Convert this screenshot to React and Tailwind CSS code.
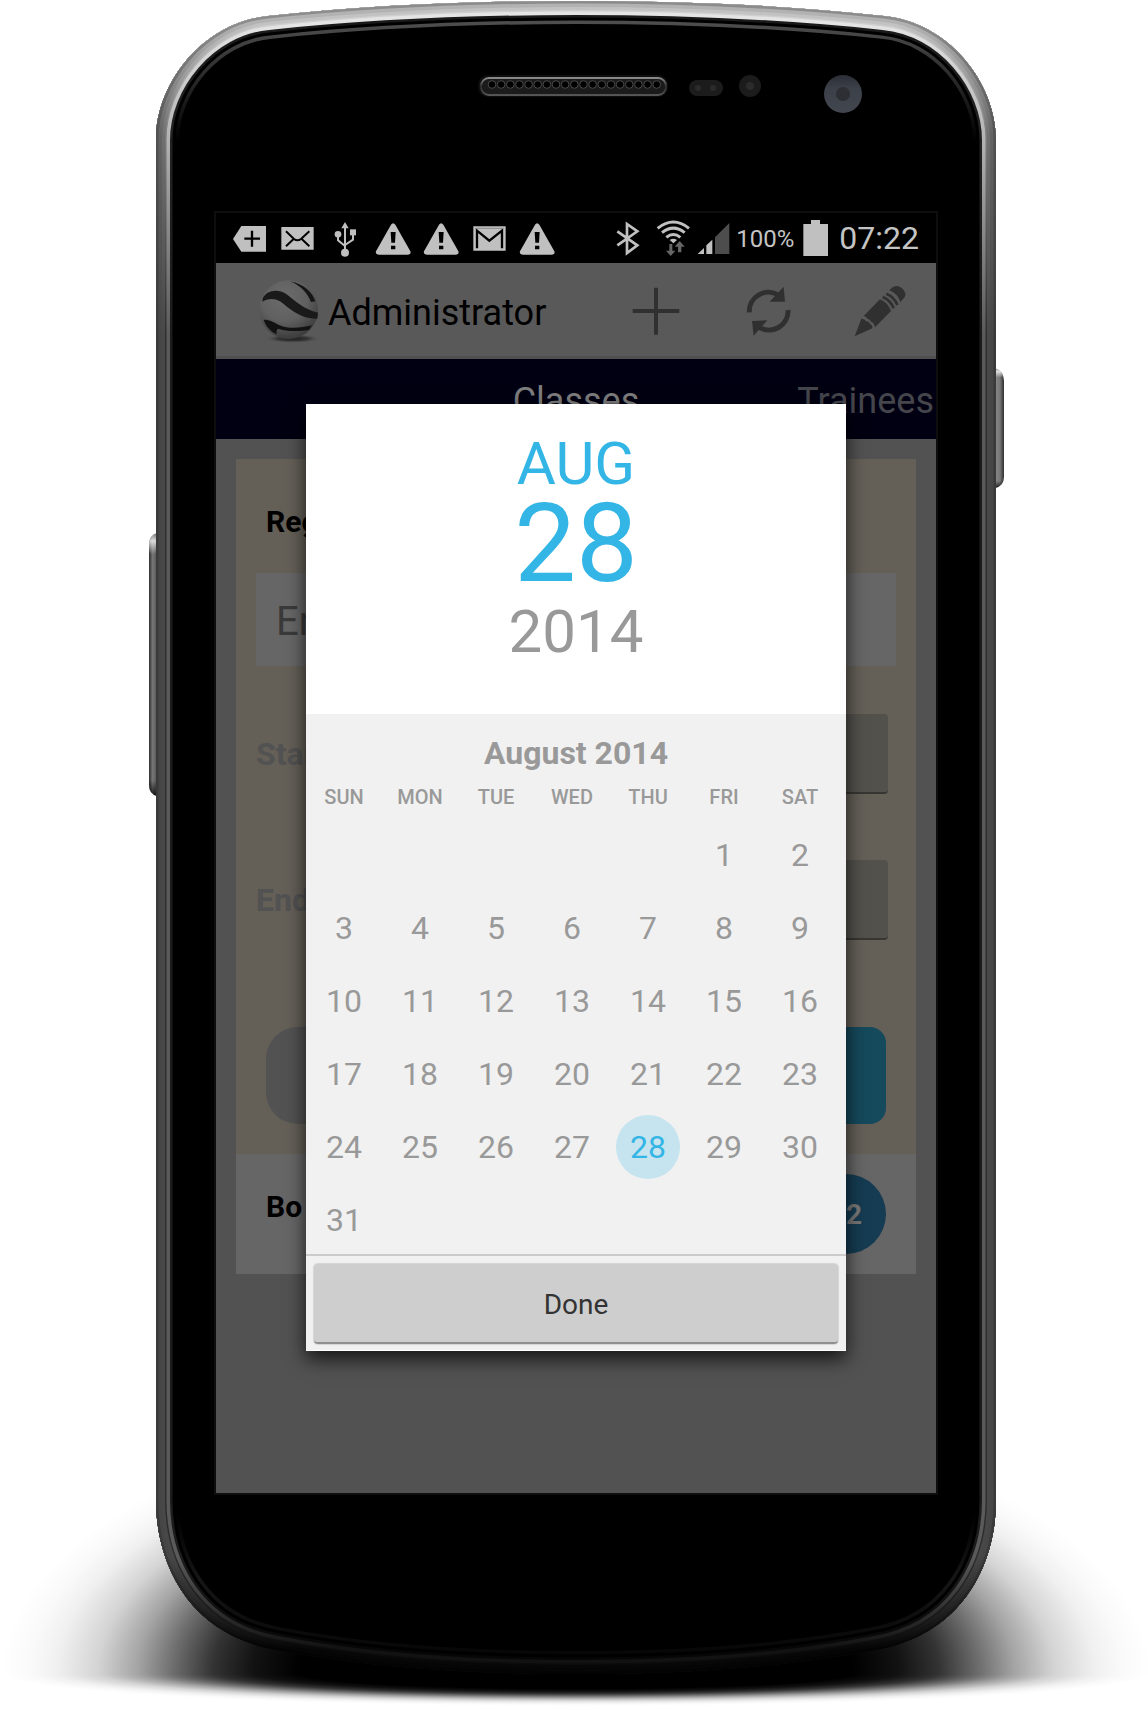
import React from "react";

const OUTLINE =
  "M156 140 C156 82 204 22 268 16 C370 5 470 1 576 1 C682 1 782 5 884 16 C948 22 996 82 996 140 V1500 C996 1570 958 1636 875 1650 C780 1668 680 1674 576 1674 C472 1674 372 1668 277 1650 C194 1636 156 1570 156 1500 Z";

const rim = [
  { w: 36, id: "rimEdge" },
  { w: 31, id: "rimBright" },
  { w: 24, id: "rimLine" },
  { w: 21, id: "rimUpper" },
  { w: 15, id: "rimMid" },
  { w: 8, id: "rimOuter" },
  { w: 3, id: "rimDark" },
];

const rimStops = {
  rimEdge: ["#1a1a1a", "#222222", "#1c1c1c", "#060606"],
  rimBright: ["#e4e4e4", "#b5b5b5", "#5a5a5a", "#121212"],
  rimLine: ["#cfcfcf", "#7d7d7d", "#2e2e2e", "#0b0b0b"],
  rimUpper: ["#c2c2c2", "#707070", "#484848", "#070707"],
  rimMid: ["#b2b2b2", "#646464", "#464646", "#050505"],
  rimOuter: ["#8c8c8c", "#525252", "#3a3a3a", "#030303"],
  rimDark: ["#606060", "#3a3a3a", "#202020", "#000000"],
};

const shadeStops = [
  [0.48, 1],
  [0.56, 0.93],
  [0.63, 0.8],
  [0.7, 0.57],
  [0.76, 0.36],
  [0.83, 0.17],
  [0.9, 0.06],
  [0.95, 0.02],
  [1, 0],
];

function Shade({ id, ry }) {
  return (
    <radialGradient
      id={id}
      gradientUnits="userSpaceOnUse"
      cx="0"
      cy="0"
      r="1"
      gradientTransform={"translate(576 1673) scale(576 " + ry + ")"}
    >
      {shadeStops.map(([o, a]) => (
        <stop key={o} offset={o} stopColor="#000" stopOpacity={a} />
      ))}
    </radialGradient>
  );
}

function PhoneBody() {
  return (
    <svg
      className="absolute inset-0 h-full w-full"
      viewBox="0 0 1148 1712"
      preserveAspectRatio="none"
      aria-hidden="true"
    >
      <defs>
        <clipPath id="bodyClip">
          <path d={OUTLINE} />
        </clipPath>
        {Object.entries(rimStops).map(([id, c]) => (
          <linearGradient key={id} id={id} gradientUnits="userSpaceOnUse" x1="0" y1="0" x2="0" y2="1674">
            <stop offset="0" stopColor={c[0]} />
            <stop offset="0.015" stopColor={c[0]} />
            <stop offset="0.08" stopColor={c[1]} />
            <stop offset="0.2" stopColor={c[2]} />
            <stop offset="0.93" stopColor={c[2]} />
            <stop offset="0.985" stopColor={c[3]} />
          </linearGradient>
        ))}
        <linearGradient id="glass" gradientUnits="userSpaceOnUse" x1="0" y1="18" x2="0" y2="1660">
          <stop offset="0" stopColor="#505050" />
          <stop offset="0.02" stopColor="#3c3c3c" />
          <stop offset="0.075" stopColor="#000" />
          <stop offset="0.91" stopColor="#000" />
          <stop offset="0.95" stopColor="#161616" />
          <stop offset="1" stopColor="#050505" />
        </linearGradient>
        <Shade id="shade" ry={265} />
        <Shade id="shadeLow" ry={33} />
        <linearGradient id="sideKey" x1="0" y1="0" x2="1" y2="0">
          <stop offset="0" stopColor="#8a8a8a" />
          <stop offset="0.55" stopColor="#777" />
          <stop offset="1" stopColor="#2e2e2e" />
        </linearGradient>
        <linearGradient id="sideKeyLeft" x1="0" y1="0" x2="1" y2="0">
          <stop offset="0" stopColor="#2e2e2e" />
          <stop offset="0.45" stopColor="#777" />
          <stop offset="1" stopColor="#555" />
        </linearGradient>
        <linearGradient id="keyCap" x1="0" y1="0" x2="0" y2="1">
          <stop offset="0" stopColor="#fff" stopOpacity="0.1" />
          <stop offset="0.03" stopColor="#fff" stopOpacity="0.75" />
          <stop offset="0.08" stopColor="#fff" stopOpacity="0" />
          <stop offset="0.94" stopColor="#000" stopOpacity="0" />
          <stop offset="1" stopColor="#000" stopOpacity="0.8" />
        </linearGradient>
        <linearGradient id="grilleRim" x1="0" y1="0" x2="0" y2="1">
          <stop offset="0" stopColor="#8a8a8a" />
          <stop offset="0.5" stopColor="#2b2b2b" />
          <stop offset="1" stopColor="#555" />
        </linearGradient>
        <linearGradient id="lens" x1="0" y1="0" x2="0" y2="1">
          <stop offset="0" stopColor="#2b2e35" />
          <stop offset="0.35" stopColor="#3c4048" />
          <stop offset="1" stopColor="#42464f" />
        </linearGradient>
      </defs>

      <path d="M0 1673 V1400 H1148 V1673 Z" fill="url(#shade)" />
      <path d="M0 1673 H1148 V1712 H0 Z" fill="url(#shadeLow)" />

      <path d="M157 533 Q149 535 149 545 V785 Q149 794 157 796 Z" fill="url(#sideKeyLeft)" />
      <path d="M157 533 Q149 535 149 545 V785 Q149 794 157 796 Z" fill="url(#keyCap)" />
      <path d="M995 368 Q1004 371 1004 381 V477 Q1004 486 995 488 Z" fill="url(#sideKey)" />
      <path d="M995 368 Q1004 371 1004 381 V477 Q1004 486 995 488 Z" fill="url(#keyCap)" />

      <g clipPath="url(#bodyClip)">
        <path d={OUTLINE} fill="#000" />
        <path d={OUTLINE} fill="none" stroke="url(#glass)" strokeWidth="46" />
        <path d={OUTLINE} fill="none" stroke="#000" strokeWidth="39" />
        {rim.map((r) => (
          <path
            key={r.id}
            d={OUTLINE}
            fill="none"
            stroke={"url(#" + r.id + ")"}
            strokeWidth={r.w - 3}
          />
        ))}
      </g>

      <rect x="478" y="75" width="190" height="22" rx="10" fill="#0e0e0e" />
      <rect x="481" y="78" width="185" height="17" rx="8" fill="#1b1b1b" stroke="url(#grilleRim)" strokeWidth="2" />
      <g fill="#000" stroke="#4a4a4a" strokeWidth="1">
        {Array.from({ length: 19 }, (_, i) => (
          <circle key={i} cx={492 + i * 9.15} cy="84.5" r="3.8" />
        ))}
      </g>
      <rect x="689" y="80" width="34" height="16" rx="8" fill="#1c1c1c" />
      <circle cx="698" cy="88" r="3" fill="#2b2b2b" />
      <circle cx="713" cy="88" r="3" fill="#2b2b2b" />
      <circle cx="750" cy="86" r="11" fill="#1c1c1c" />
      <circle cx="750" cy="86" r="4" fill="#2c2c2c" />
      <circle cx="843" cy="94" r="19" fill="url(#lens)" />
      <circle cx="843" cy="94" r="7" fill="#2d2f34" />
      <rect x="215" y="212" width="722" height="1282" fill="none" stroke="#0e0e0e" strokeWidth="2" />
    </svg>
  );
}

function Cell({ children }) {
  return (
    <svg className="h-[50px] w-12 shrink-0" viewBox="0 0 144 150" fill="#c0c0c0" aria-hidden="true">
      {children}
    </svg>
  );
}

function Warning() {
  return (
    <Cell>
      <path d="M63 35 Q69 26 76 35 L121 115 Q124 125 114 125 H26 Q16 125 18 115 Z" />
      <path d="M62 57 H77 L75 89 H64 Z M63 98 H76 V109 H63 Z" fill="#000" />
    </Cell>
  );
}

function StatusBar() {
  return (
    <div className="flex h-[50px] items-center bg-black pl-[10px] pr-[17px] text-[#c4c4c4]">
      <Cell>
        <path d="M21 78 L46 39 H120 V116 H46 Z" />
        <path d="M55 77 H102 M78 53 V101" stroke="#000" strokeWidth="7" />
      </Cell>
      <Cell>
        <path d="M22 42 H119 V110 H22 Z" />
        <path
          d="M36 55 L60 78 Q70 86 81 78 L106 55 M36 100 L58 79 M106 100 L84 79"
          fill="none"
          stroke="#000"
          strokeWidth="6"
        />
      </Cell>
      <Cell>
        <path d="M69 36 V118 M48 66 V82 L69 99 M93 60 V80 L69 96" fill="none" stroke="#c0c0c0" strokeWidth="6" />
        <path d="M69 27 L80 46 H58 Z" />
        <circle cx="69" cy="119" r="12" />
        <circle cx="48" cy="64" r="10" />
        <path d="M84 49 H102 V67 H84 Z" />
      </Cell>
      <Warning />
      <Warning />
      <Cell>
        <path d="M22 40 H119 V113 H22 Z" />
        <path d="M33 106 V53 L70 83 L108 53 V106" fill="none" stroke="#000" strokeWidth="7" />
        <path d="M28 46 H113" stroke="#888" strokeWidth="3" />
      </Cell>
      <Warning />

      <svg className="ml-auto h-[50px] w-[25px]" viewBox="135 24 75 150" aria-label="Bluetooth">
        <path
          d="M142 79 L202 121 L171 144 V57 L202 79 L142 121"
          fill="none"
          stroke="#c0c0c0"
          strokeWidth="8"
        />
      </svg>
      <svg className="ml-[15px] h-[50px] w-9" viewBox="255 24 108 150" aria-label="Wi-Fi">
        <g fill="none" stroke="#c0c0c0" strokeWidth="9">
          <path d="M263 70 Q310 32 357 70" />
          <path d="M276 83 Q310 56 344 83" />
          <path d="M289 97 Q310 80 331 97" />
        </g>
        <path d="M299 105 Q310 97 321 105 L310 115 Z" fill="#c0c0c0" />
        <path d="M298 117 H307 V137 H316 L302 153 L288 137 H298 Z" fill="#666" />
        <path d="M324 142 H334 V125 H344 L329 108 L314 125 H324 Z" fill="#666" />
      </svg>
      <svg className="ml-[5px] h-[50px] w-[35px]" viewBox="378 24 105 150" aria-label="Signal">
        <path d="M383 147 L402 129 V147 Z M409 147 V121 L427 104 V147 Z" fill="#c0c0c0" />
        <path d="M435 147 V97 L478 54 V147 Z" fill="#4d4d4d" />
      </svg>
      <span className="ml-[5px] pt-[2px] text-2xl">100%</span>
      <svg className="ml-2 h-[50px] w-[27px]" viewBox="693 24 81 150" aria-label="Battery full">
        <path d="M697 57 H720 V45 H747 V57 H771 V153 H697 Z" fill="#c0c0c0" />
      </svg>
      <span className="ml-[10px] text-[32px]">07:22</span>
    </div>
  );
}

function Globe() {
  return (
    <svg className="h-[67px] w-[63px]" viewBox="140 220 189 201" aria-hidden="true">
      <defs>
        <radialGradient id="ball" cx="0.42" cy="0.3" r="0.72">
          <stop offset="0" stopColor="#6c6c6c" />
          <stop offset="0.55" stopColor="#606060" />
          <stop offset="1" stopColor="#3a3a3a" />
        </radialGradient>
        <radialGradient id="ballShade">
          <stop offset="0" stopColor="#1c1c1c" />
          <stop offset="0.55" stopColor="#2c2c2c" stopOpacity="0.8" />
          <stop offset="1" stopColor="#595959" stopOpacity="0" />
        </radialGradient>
      </defs>
      <ellipse cx="247" cy="402" rx="84" ry="13" fill="url(#ballShade)" />
      <circle cx="235" cy="315" r="88" fill="url(#ball)" />
      <path d="M240 230 C280 238 306 262 315 290 L302 292 C292 266 272 244 240 230 Z" fill="#161616" />
      <path
        d="M157 281 C168 258 200 250 228 268 C256 290 280 314 323 324 L321 342 C280 344 246 320 220 298 C200 280 176 278 156 291 Z"
        fill="#1a1a1a"
      />
      <path
        d="M160 346 C172 342 186 350 204 360 C236 374 270 370 305 362 L296 375 C262 382 226 380 203 372 C198 376 198 382 199 389 C180 380 166 364 160 346 Z"
        fill="#121212"
      />
    </svg>
  );
}

function ActionBar() {
  const action = "flex w-28 items-center justify-center";
  return (
    <header className="flex h-24 items-stretch border-b-[3px] border-[#505050] bg-[#595959] pl-[41px]">
      <div className="flex items-center gap-2 pt-1">
        <Globe />
        <h1 className="pt-[3px] text-[36px] text-black">Administrator</h1>
      </div>
      <div className="ml-auto flex">
        <button className={action} aria-label="Add">
          <svg className="size-14" viewBox="174 231 168 168">
            <path d="M188 318 H328 M258 248 V389" stroke="#303030" strokeWidth="12" />
          </svg>
        </button>
        <button className={action} aria-label="Refresh">
          <svg className="size-14" viewBox="510 231 168 168">
            <path d="M538 322 A57 57 0 0 1 626 271" fill="none" stroke="#303030" strokeWidth="15" />
            <path d="M654 315 A57 57 0 0 1 566 366" fill="none" stroke="#303030" strokeWidth="15" />
            <path d="M641 245 L645 290 L599 290 Z" fill="#303030" />
            <path d="M551 392 L546 348 L592 346 Z" fill="#303030" />
          </svg>
        </button>
        <button className={action} aria-label="Edit">
          <svg className="size-14" viewBox="846 231 168 168" fill="#303030">
            <path d="M854 394 L874 341 Q884 340 888 349 Q898 349 900 357 Q908 360 907 370 Z" />
            <path d="M881 333 L930 283 Q954 293 963 318 L915 367 Q913 354 903 350 Q901 342 892 341 Q890 334 881 333 Z" />
            <path
              d="M938 276 Q962 286 971 310 M949 266 Q973 276 982 300"
              fill="none"
              stroke="#303030"
              strokeWidth="8"
            />
            <path d="M958 256 L966 248 Q980 238 994 248 Q1011 262 1004 277 Q1001 281 991 291 Q983 266 958 256 Z" />
          </svg>
        </button>
      </div>
    </header>
  );
}

function ClassForm() {
  const dateButton =
    "h-20 w-[400px] rounded-sm border-b-2 border-[#373632] bg-[#53514c] text-[28px] text-black";
  return (
    <form className="mx-5 mt-5 bg-[#645f57]" onSubmit={(e) => e.preventDefault()}>
      <h2 className="flex h-[114px] items-center pl-[30px] pt-[10px] text-[30px] font-bold text-black">Register</h2>
      <div className="px-5">
        <input
          aria-label="Class name"
          placeholder="Enter class"
          className="h-[93px] w-full bg-[#666666] pl-5 pt-1 text-[40px] text-black placeholder:text-[#3a3a3a]"
        />
      </div>
      <div className="mt-12 flex h-20 items-center justify-between pl-5 pr-7">
        <label htmlFor="start" className="text-[32px] font-bold text-[#525252]">Start</label>
        <button id="start" type="button" className={dateButton} />
      </div>
      <div className="mt-[66px] flex h-20 items-center justify-between pl-5 pr-7">
        <label htmlFor="end" className="text-[32px] font-bold text-[#525252]">End</label>
        <button id="end" type="button" className={dateButton} />
      </div>
      <div className="mt-[87px] flex gap-5 px-[30px] pb-[30px]">
        <button type="reset" aria-label="Cancel" className="h-[97px] flex-1 rounded-[32px] bg-[#525252]" />
        <button type="submit" aria-label="Save" className="h-[97px] flex-1 rounded-2xl bg-[#15495c]" />
      </div>
      <div className="flex h-[120px] items-center justify-between bg-[#666666] px-[30px]">
        <span className="pb-4 text-[30px] font-bold text-black">Bo</span>
        <span className="flex size-20 items-center justify-center rounded-full bg-[#153c52] pt-[2px] text-[28px] font-bold text-[#777]">
          12
        </span>
      </div>
    </form>
  );
}

const weekdays = ["SUN", "MON", "TUE", "WED", "THU", "FRI", "SAT"];
const weeks = Array.from({ length: 6 }, (_, w) =>
  Array.from({ length: 7 }, (_, d) => {
    const n = w * 7 + d - 4;
    return n >= 1 && n <= 31 ? n : null;
  })
);

function DateDialog() {
  return (
    <section
      role="dialog"
      aria-label="Pick a date"
      className="absolute left-[12.5%] right-[12.5%] top-[191px] border-b border-white bg-[#f1f1f1] shadow-[0_8px_18px_rgba(0,0,0,0.75)]"
    >
      <div className="bg-white pb-[42px] pt-7 text-center">
        <p className="text-[60px] leading-[64px] text-[#33b5e5]">AUG</p>
        <p className="text-[110px] leading-[96px] text-[#33b5e5]">28</p>
        <p className="text-[60px] leading-[80px] text-[#999999]">2014</p>
      </div>
      <h2 className="pt-[19px] text-center text-[32px] font-bold leading-10 text-[#999999]">August 2014</h2>
      <div className="pr-2">
        <table className="w-full table-fixed text-center text-[#999999]">
          <thead>
            <tr className="h-[45px]">
              {weekdays.map((d) => (
                <th key={d} className="p-0 pt-[2px] text-xl font-medium">{d}</th>
              ))}
            </tr>
          </thead>
          <tbody>
            {weeks.map((week, i) => (
              <tr key={i} className="h-[73px]">
                {week.map((n, j) => (
                  <td key={j} className="p-0">
                    {n && (
                      <button
                        className={
                          n === 28
                            ? "mx-auto flex size-16 items-center justify-center rounded-full bg-[#c5e4ef] text-[32px] text-[#33b5e5]"
                            : "mx-auto flex size-16 items-center justify-center text-[32px]"
                        }
                      >
                        {n}
                      </button>
                    )}
                  </td>
                ))}
              </tr>
            ))}
          </tbody>
        </table>
      </div>
      <div className="-mt-[2px] border-t-2 border-[#cccccc] px-2 pb-[6px] pt-2">
        <button className="h-20 w-full rounded-sm border-b-2 border-[#8f8f8f] bg-[#cecece] pt-1 text-[28px] text-[#333333] shadow-[0_0_1px_1px_rgba(0,0,0,0.12)]">
          Done
        </button>
      </div>
    </section>
  );
}

export default function App() {
  return (
    <main className="relative grid min-h-screen w-full grid-cols-[216fr_720fr_212fr] overflow-hidden bg-white pb-[219px] pt-[213px] font-['Roboto',sans-serif]">
      <PhoneBody />
      <div className="relative col-start-2 min-w-0 overflow-hidden bg-[#525252]">
        <StatusBar />
        <ActionBar />
        <nav className="grid h-20 grid-cols-[1fr_auto_1fr] items-center bg-[#000012] pt-1 text-[36px]">
          <a href="#classes" className="col-start-2 text-[#7d7d7d]">Classes</a>
          <a href="#trainees" className="pr-[2px] text-right text-[#45454c]">Trainees</a>
        </nav>
        <ClassForm />
        <DateDialog />
      </div>
    </main>
  );
}
